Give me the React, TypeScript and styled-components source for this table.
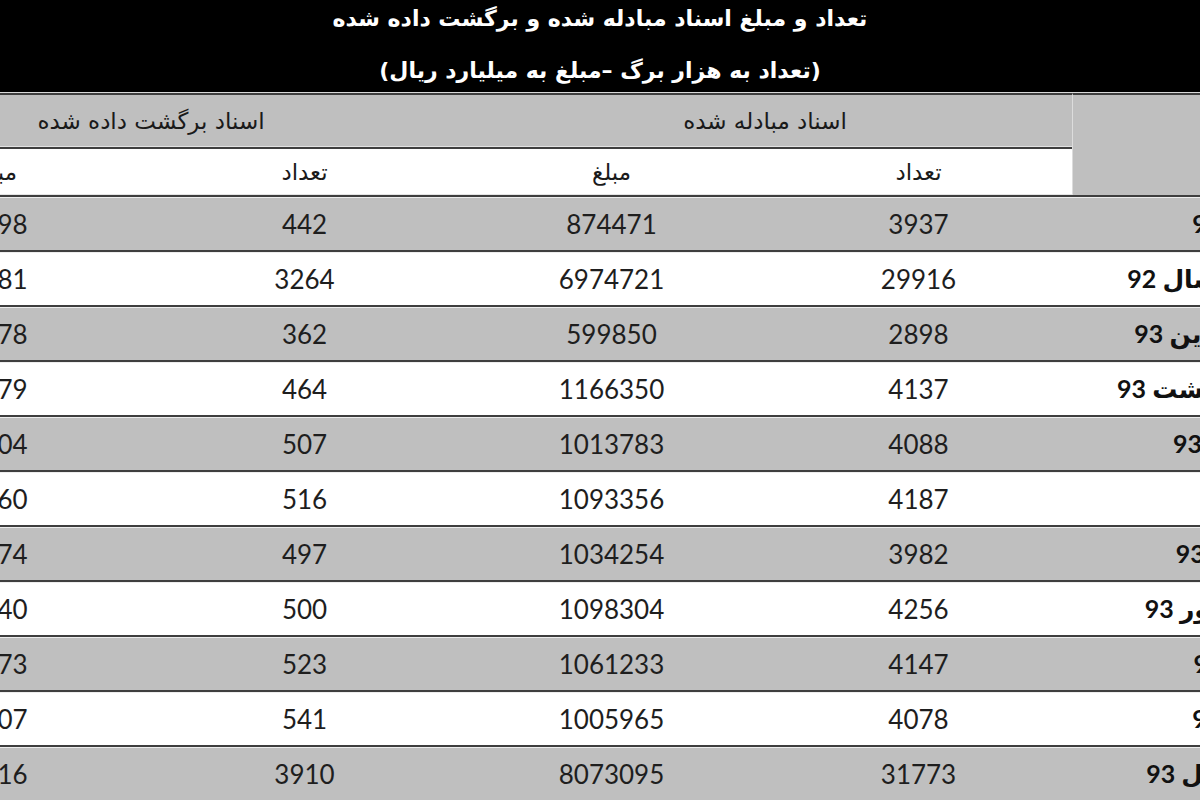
import React from "react";
import styled, { createGlobalStyle } from "styled-components";

type Row = {
  label: string;
  backAmount: string;
  backCount: string;
  amount: string;
  count: string;
};

const rows: Row[] = [
  { label: "آبان 92", backAmount: "1098", backCount: "442", amount: "874471", count: "3937" },
  { label: "جمع سال 92", backAmount: "8981", backCount: "3264", amount: "6974721", count: "29916" },
  { label: "فروردین 93", backAmount: "1078", backCount: "362", amount: "599850", count: "2898" },
  { label: "اردیبهشت 93", backAmount: "1179", backCount: "464", amount: "1166350", count: "4137" },
  { label: "خرداد 93", backAmount: "1104", backCount: "507", amount: "1013783", count: "4088" },
  { label: "تیر 93", backAmount: "1160", backCount: "516", amount: "1093356", count: "4187" },
  { label: "مرداد 93", backAmount: "1174", backCount: "497", amount: "1034254", count: "3982" },
  { label: "شهریور 93", backAmount: "1140", backCount: "500", amount: "1098304", count: "4256" },
  { label: "مهر 93", backAmount: "1073", backCount: "523", amount: "1061233", count: "4147" },
  { label: "آبان 93", backAmount: "1107", backCount: "541", amount: "1005965", count: "4078" },
  { label: "جمع کل 93", backAmount: "9016", backCount: "3910", amount: "8073095", count: "31773" },
];

const App = () => {
  return (
    <Page>
      <GlobalStyle />
      <TitleBar>
        <TitleLine>تعداد و مبلغ اسناد مبادله شده و برگشت داده شده</TitleLine>
        <TitleLine>(تعداد به هزار برگ –مبلغ به میلیارد ریال)</TitleLine>
      </TitleBar>
      <Table dir="rtl">
        <colgroup>
          <col style={{ width: 228 }} />
          <col style={{ width: 307 }} />
          <col style={{ width: 307 }} />
          <col style={{ width: 307 }} />
          <col style={{ width: 307 }} />
        </colgroup>
        <thead>
          <tr>
            <CornerCell rowSpan={2} />
            <GroupCell colSpan={2}>اسناد مبادله شده</GroupCell>
            <GroupCell colSpan={2}>اسناد برگشت داده شده</GroupCell>
          </tr>
          <tr>
            <SubCell>تعداد</SubCell>
            <SubCell>مبلغ</SubCell>
            <SubCell>تعداد</SubCell>
            <SubCell>مبلغ</SubCell>
          </tr>
        </thead>
        <tbody>
          {rows.map((r, i) => (
            <DataRow key={r.label} $shaded={i % 2 === 0}>
              <LabelCell>{r.label}</LabelCell>
              <NumCell>{r.count}</NumCell>
              <NumCell>{r.amount}</NumCell>
              <NumCell>{r.backCount}</NumCell>
              <NumCell>{r.backAmount}</NumCell>
            </DataRow>
          ))}
        </tbody>
      </Table>
    </Page>
  );
};

export default App;

const GlobalStyle = createGlobalStyle`
  body {
    margin: 0;
    background: #ffffff;
  }
`;

const Page = styled.div`
  width: 1200px;
  height: 800px;
  overflow: hidden;
  background: #ffffff;
`;

const TitleBar = styled.div`
  height: 93px;
  background: #000000;
  border-bottom: 1px solid #d9d9d9;
  display: flex;
  flex-direction: column;
  align-items: center;
  gap: 16px;
  padding-top: 1px;
  box-sizing: border-box;
`;

const TitleLine = styled.div`
  direction: rtl;
  color: #ffffff;
  font-family: "DejaVu Sans", sans-serif;
  font-weight: bold;
  font-size: 22px;
  line-height: 36px;
`;

const Table = styled.table`
  width: 1456px;
  margin-left: -156px;
  table-layout: fixed;
  border-collapse: separate;
  border-spacing: 0;
  font-family: Lato, "DejaVu Sans", sans-serif;
  color: #1e1e1e;
`;

const headFont = `
  font-family: "DejaVu Sans", sans-serif;
  font-weight: normal;
  font-size: 23px;
  color: #1a1a1a;
`;

const CornerCell = styled.th`
  background: #bfbfbf;
  border-top: 2px solid #3e3e3e;
  border-left: 1px solid #dcdcdc;
  padding: 0;
`;

const GroupCell = styled.th`
  ${headFont}
  height: 52px;
  background: #bfbfbf;
  border-top: 2px solid #3e3e3e;
  box-shadow: inset 0 -1px 0 #e2e2e2;
  padding: 0;
  text-align: center;
`;

const SubCell = styled.th`
  ${headFont}
  height: 46px;
  background: #ffffff;
  border-top: 2px solid #3e3e3e;
  box-shadow: inset 0 -1px 0 #e4e4e4;
  padding: 0;
  text-align: center;
`;

const DataRow = styled.tr<{ $shaded: boolean }>`
  background: ${(p) => (p.$shaded ? "#bfbfbf" : "#ffffff")};

  & > td {
    height: 53px;
    border-top: 2px solid #3e3e3e;
    box-shadow: inset 0 1px 0 #ededed;
    padding: 0;
  }
`;

const NumCell = styled.td`
  text-align: center;
  font-size: 26px;
  font-weight: normal;
`;

const LabelCell = styled.td`
  text-align: right;
  padding-right: 24px !important;
  font-size: 25px;
  font-weight: bold;
  color: #111111;
  white-space: nowrap;
`;
